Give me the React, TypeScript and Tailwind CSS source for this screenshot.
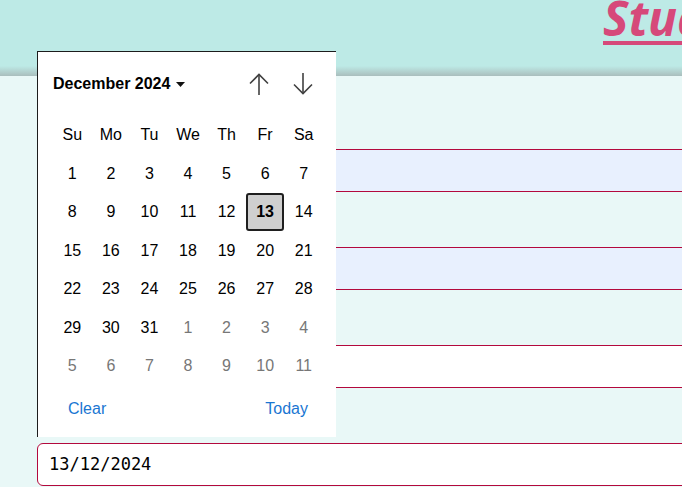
import React from "react";

const weekdays = ["Su", "Mo", "Tu", "We", "Th", "Fr", "Sa"];

type Day = { n: number; muted?: boolean; selected?: boolean };

const buildDays = (): Day[] => {
  const days: Day[] = [];
  for (let i = 1; i <= 31; i++) days.push({ n: i, selected: i === 13 });
  for (let i = 1; i <= 11; i++) days.push({ n: i, muted: true });
  return days;
};

// labels sit under the open picker, so they carry no visible text here
const fields = [
  { name: "fullName", filled: true },
  { name: "email", filled: true },
  { name: "phone", filled: false },
];

const ArrowUp = () => (
  <svg width="20" height="22" viewBox="0 0 20 22" fill="none" stroke="#404040" strokeWidth="1.6">
    <path d="M10 1.5V22" />
    <path d="M1 10.5L10 1.5L19 10.5" />
  </svg>
);

const ArrowDown = () => (
  <svg width="20" height="22" viewBox="0 0 20 22" fill="none" stroke="#404040" strokeWidth="1.6">
    <path d="M10 0V20.5" />
    <path d="M1 11.5L10 20.5L19 11.5" />
  </svg>
);

const DatePopup = () => {
  const days = buildDays();
  return (
    <div className="absolute left-[37px] top-[51px] w-[299px] h-[386px] bg-white border-l border-t border-[#1c1c1c] pl-[15px] pt-[15px] font-['Liberation_Sans',Arial,sans-serif] text-black">
      {/* month / year row */}
      <div className="w-[270px] h-[34px] flex items-center justify-between">
        <div className="flex items-center gap-[6px] text-[16px] font-bold">
          <span>December 2024</span>
          <svg width="9" height="5" viewBox="0 0 9 5">
            <path d="M0 0H9L4.5 5Z" fill="#111" />
          </svg>
        </div>
        <div className="flex items-center gap-[24px] mr-[10px]">
          <ArrowUp />
          <ArrowDown />
        </div>
      </div>

      {/* weekday + day grid */}
      <div className="mt-[15px] w-[270px] grid grid-cols-7 text-[16px]">
        {weekdays.map((d) => (
          <div key={d} className="h-[38.5px] flex items-center justify-center">
            {d}
          </div>
        ))}
        {days.map((d, i) => (
          <div key={i} className="h-[38.5px] flex items-center justify-center">
            {d.selected ? (
              <div className="w-[38px] h-[38px] flex items-center justify-center bg-[#cfcfcf] border-2 border-[#1f1f1f] rounded-[3px] font-bold">
                {d.n}
              </div>
            ) : (
              <span className={d.muted ? "text-[#777777]" : ""}>{d.n}</span>
            )}
          </div>
        ))}
      </div>

      {/* footer */}
      <div className="w-[270px] h-[46px] px-[15px] flex items-center justify-between text-[16px] text-[#1a76d2]">
        <span>Clear</span>
        <span>Today</span>
      </div>
    </div>
  );
};

export default function App() {
  return (
    <div className="relative w-[682px] h-[487px] overflow-hidden bg-[#e9f8f7]">
      <header className="relative h-[76px] bg-[#bdeae6] pl-[603px] whitespace-nowrap">
        <a className="block text-[48px] leading-[36px] font-bold italic text-[#d6497a] underline decoration-[4px] underline-offset-[5px] font-['Open_Sans',sans-serif]">
          Student Portal
        </a>
        <div className="absolute left-0 right-0 bottom-0 h-[10px] bg-gradient-to-b from-[#bdeae6] to-[#a9bebd]" />
      </header>

      <main className="pl-[37px] pt-[18px]">
        {fields.map((f) => (
          <div key={f.name}>
            <div className="h-[55px]" />
            <input
              readOnly
              aria-label={f.name}
              className={`block w-[700px] h-[43px] rounded-md border border-[#b3093d] outline-none px-[11px] ${
                f.filled ? "bg-[#e8f0fe]" : "bg-white"
              }`}
            />
          </div>
        ))}
        <div className="h-[55px]" />
        <div className="w-[700px] h-[43px] rounded-md border border-[#b3093d] bg-white flex items-center px-[11px] text-[17px] text-black font-['DejaVu_Sans_Mono',monospace]">
          13/12/2024
        </div>
      </main>

      <DatePopup />
    </div>
  );
}
